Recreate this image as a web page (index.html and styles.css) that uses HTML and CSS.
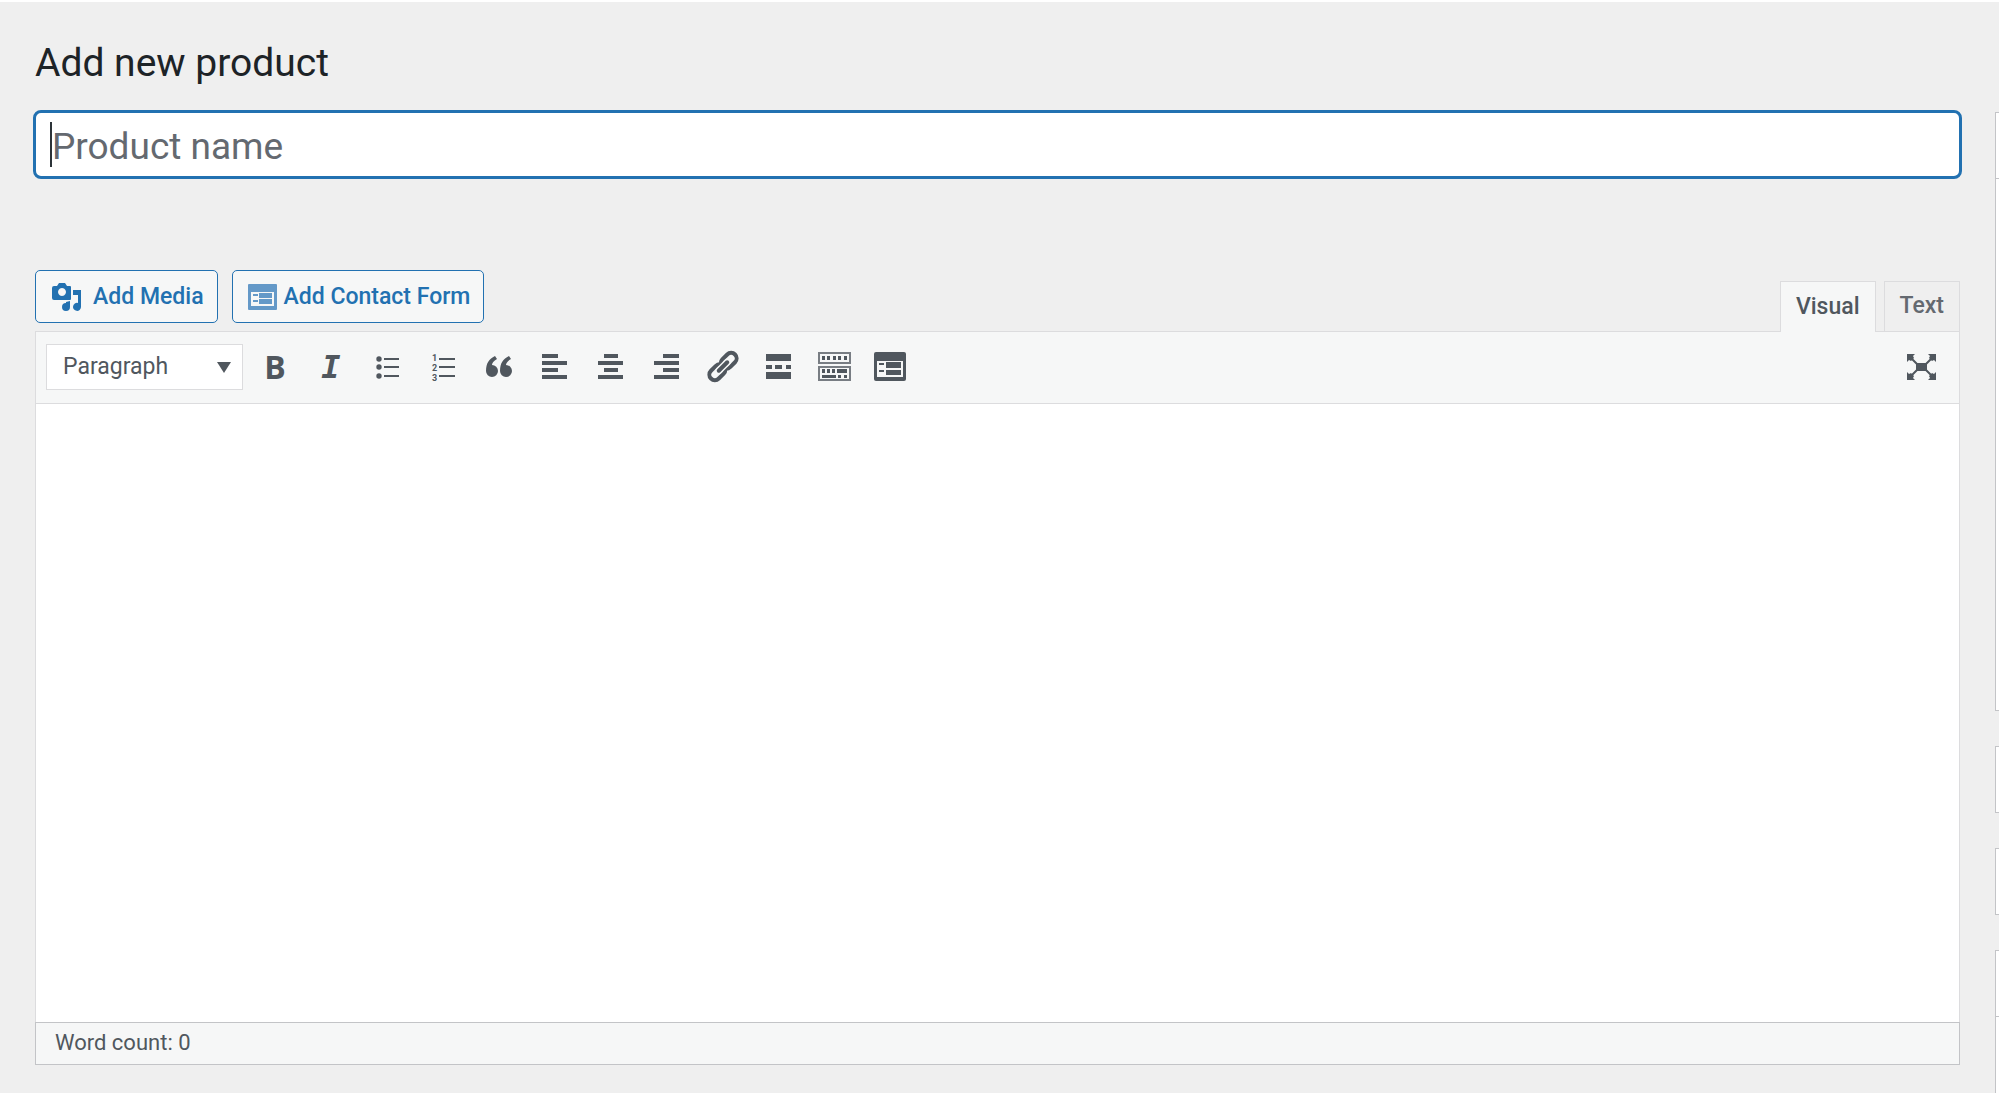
FILE: index.html
```
<!DOCTYPE html>
<html lang="en">
<head>
    <meta charset="UTF-8">
    <meta name="viewport" content="width=device-width, initial-scale=1.0">
    <title>Add new product</title>
    <link rel="stylesheet" href="styles.css">
</head>
<body>
    <div class="page">
        <main class="main">
            <h1>Add new product</h1>
            <form class="product-form">
                <div class="title-wrap">
                    <input type="text" class="title-input" id="title" name="title" placeholder="Product name" aria-label="Product name" autofocus>
                </div>

                <div class="editor-tools">
                    <div class="media-buttons">
                        <button type="button" class="button media">
                            <svg width="30" height="30" viewBox="0 0 30 30">
                                <path fill-rule="evenodd" d="M3 4h3l2-3h6l2 3h3q1 0 1 1v12q0 1-1 1H3q-2 0-2-2V6q0-2 2-2zM11 6a4 4 0 1 0 0.010 0z"/>
                                <path d="M22 8h8v17a4 4 0 1 1-3-4v-8h-5z"/>
                                <path d="M15 20l4-1v6a4 4 0 1 1-4-4z"/>
                            </svg>
                            Add Media
                        </button>
                        <button type="button" class="button contact">
                            <svg width="29" height="26" viewBox="0 0 29 26">
                                <rect width="29" height="26" rx="1"/>
                                <path class="cut" d="M3 8h23v14H3z"/>
                                <path d="M5 10h5v2H5zM5 16h5v2H5zM11 9h13v5H11zM11 15h13v5H11z"/>
                            </svg>
                            Add Contact Form
                        </button>
                    </div>
                    <div class="tabs">
                        <button type="button" class="tab active">Visual</button>
                        <button type="button" class="tab">Text</button>
                    </div>
                </div>

                <div class="editor">
                    <div class="toolbar">
                        <div class="format">
                            <select aria-label="Format">
                                <option>Paragraph</option>
                                <option>Heading 1</option>
                                <option>Heading 2</option>
                                <option>Preformatted</option>
                            </select>
                        </div>
                        <div class="tool-group">
                            <button type="button" class="tool bold" aria-label="Bold">B</button>
                            <button type="button" class="tool italic" aria-label="Italic">I</button>
                            <button type="button" class="tool" aria-label="Bulleted list">
                                <svg viewBox="0 0 36 36">
                                    <circle cx="10" cy="10" r="2.700"/><circle cx="10" cy="18" r="2.700"/><circle cx="10" cy="27" r="2.700"/>
                                    <path d="M15 9h15v2H15zM15 17h15v2H15zM15 26h15v2H15z"/>
                                </svg>
                            </button>
                            <button type="button" class="tool" aria-label="Numbered list">
                                <svg viewBox="0 0 36 36">
                                    <text x="7" y="12">1</text><text x="7" y="22">2</text><text x="7" y="32">3</text>
                                    <path d="M14 9h16v2H14zM14 17h16v2H14zM14 26h16v2H14z"/>
                                </svg>
                            </button>
                            <button type="button" class="tool" aria-label="Blockquote">
                                <svg viewBox="0 0 36 36">
                                    <path d="M14 7l2 3q-5 3-5 6a6 6 0 1 1-6 6C5 14 8 10 14 7zM28 7l2 3q-5 3-5 6a6 6 0 1 1-6 6C19 14 22 10 28 7z"/>
                                </svg>
                            </button>
                            <button type="button" class="tool" aria-label="Align left">
                                <svg viewBox="0 0 36 36"><path d="M5 5h16v4H5zM5 12h25v4H5zM5 19h16v4H5zM5 26h25v4H5z"/></svg>
                            </button>
                            <button type="button" class="tool" aria-label="Align center">
                                <svg viewBox="0 0 36 36"><path d="M11 5h14v4H11zM5 12h25v4H5zM11 19h14v4H11zM5 26h25v4H5z"/></svg>
                            </button>
                            <button type="button" class="tool" aria-label="Align right">
                                <svg viewBox="0 0 36 36"><path d="M14 5h16v4H14zM5 12h25v4H5zM14 19h16v4H14zM5 26h25v4H5z"/></svg>
                            </button>
                            <button type="button" class="tool" aria-label="Insert link">
                                <svg viewBox="0 0 36 36">
                                    <g transform="rotate(-45 18 17.500)">
                                        <rect class="line" x="1" y="12" width="18" height="11" rx="5.500"/>
                                        <rect class="line" x="17" y="12" width="18" height="11" rx="5.500"/>
                                        <path class="gap" d="M12 17.500h12"/>
                                        <path class="line" d="M12 17.500h12"/>
                                    </g>
                                </svg>
                            </button>
                            <button type="button" class="tool" aria-label="Read more">
                                <svg viewBox="0 0 36 36"><path d="M5 5h25v7H5zM5 16h6v4H5zM14 16h7v4H14zM25 16h5v4H25zM5 23h25v7H5z"/></svg>
                            </button>
                            <button type="button" class="tool" aria-label="Toolbar toggle">
                                <svg viewBox="0 0 36 36">
                                    <path class="soft" fill-rule="evenodd" d="M1 3h33v12H1zM3 5v8h29V5zM1 17h33v15H1zM3 19v11h29V19z"/>
                                    <path d="M5 7h3v4H5zM10 7h3v4h-3zM16 7h3v4h-3zM21 7h3v4h-3zM27 7h3v4h-3zM5 20h3v4H5zM10 20h3v4h-3zM15 20h3v4h-3zM20 20h10v4H20zM5 26h14v3H5zM21 26h3v3h-3zM27 26h3v3h-3z"/>
                                </svg>
                            </button>
                            <button type="button" class="tool" aria-label="Add contact form">
                                <svg viewBox="0 0 36 36">
                                    <rect x="1" y="3" width="32" height="29" rx="2"/>
                                    <path class="cut" d="M4 12h26v16H4z"/>
                                    <path d="M6 14h5v2H6zM6 21h5v2H6zM13 13h15v6H13zM13 21h15v5H13z"/>
                                </svg>
                            </button>
                        </div>
                        <button type="button" class="tool fullscreen" aria-label="Distraction-free writing mode">
                            <svg viewBox="0 0 36 36">
                                <path d="M13 14h11v8H13zM4 5h8l-2 2 1 2-3 3-2-1-2 2zM33 5v8l-2-2-2 1-3-3 1-2-2-2zM4 31v-8l2 2 2-1 3 3-1 2 2 2zM33 31h-8l2-2-1-2 3-3 2 1 2-2z"/>
                                <path class="thin" d="M7 8l7 7M30 8l-7 7M7 28l7-7M30 28l-7-7"/>
                            </svg>
                        </button>
                    </div>
                    <textarea class="content" aria-label="Product description"></textarea>
                    <div class="status">Word count: 0</div>
                </div>
            </form>
        </main>
        <aside class="sidebar">
            <div class="box publish"><div class="box-header"></div></div>
            <div class="box"></div>
            <div class="box"></div>
            <div class="box last"><div class="box-header"></div></div>
        </aside>
    </div>
</body>
</html>
```
FILE: styles.css
```
* {
    box-sizing: border-box;
}
body {
    margin: 0;
    padding: 2px 0 1px;
    background: #fff;
    color: #50575e;
    font-family: Roboto, sans-serif;
    font-size: 23px;
}
button,
input,
select,
textarea {
    font: inherit;
    color: inherit;
}
.page {
    display: grid;
    grid-template-columns: 1fr 4px;
    column-gap: 33px;
    min-height: calc(100vh - 3px);
    padding-left: 33px;
    background: #efefef;
    overflow: hidden;
}
.main {
    display: flex;
    flex-direction: column;
    padding: 37px 0 28px;
}
h1 {
    margin: 0 2px 23px;
    color: #1d2327;
    font-size: 39px;
    font-weight: 400;
    line-height: 48px;
}
.product-form {
    display: flex;
    flex: 1;
    flex-direction: column;
}
.title-wrap {
    position: relative;
}
/* text cursor */
.title-wrap::after {
    content: "";
    position: absolute;
    top: 12px;
    left: 17px;
    width: 2px;
    height: 45px;
    background: #2c3338;
}
.title-input {
    display: block;
    width: 100%;
    height: 69px;
    padding: 3px 16px 0;
    border: 3px solid #2271b1;
    border-radius: 8px;
    outline: none;
    background: #fff;
    font-size: 37px;
    caret-color: transparent;
}
.title-input::placeholder {
    color: #646970;
    opacity: 1;
}
.editor-tools {
    display: flex;
    justify-content: space-between;
    margin: 91px 2px 0;
}
.media-buttons {
    display: flex;
    gap: 14px;
    margin-bottom: 8px;
}
.button {
    display: flex;
    align-items: center;
    height: 53px;
    padding: 0 13px 0 15px;
    border: 1px solid #2271b1;
    border-radius: 5px;
    background: #f6f7f7;
    color: #2271b1;
    font-weight: 500;
    cursor: pointer;
}
.button svg {
    fill: currentColor;
}
.media svg {
    margin-right: 12px;
}
.contact svg {
    margin-right: 7px;
    fill: #6499c8;
}
svg .cut {
    fill: #f6f7f7;
}
.tabs {
    display: flex;
    gap: 8px;
    margin-top: 11px;
}
.tab {
    height: 50px;
    margin: 0;
    padding: 0 15px 2px;
    border: 1px solid #dcdcde;
    border-bottom: 0;
    background: #efefef;
    color: #646970;
    font-weight: 500;
    cursor: pointer;
}
.tab.active {
    height: 51px;
    margin-bottom: -1px;
    background: #f6f7f7;
    color: #50575e;
    z-index: 1;
}
.editor {
    display: flex;
    flex: 1;
    flex-direction: column;
    margin: 0 2px;
    border: 1px solid #dcdcde;
    background: #fff;
}
.toolbar {
    display: flex;
    align-items: center;
    gap: 14px;
    height: 72px;
    padding: 0 20px 2px 10px;
    border-bottom: 1px solid #dcdcde;
    background: #f6f7f7;
}
.format {
    position: relative;
}
.format select {
    display: block;
    width: 197px;
    height: 46px;
    padding: 0 16px;
    border: 1px solid #dcdcde;
    border-radius: 0;
    background: #fff;
    appearance: none;
}
.format::after {
    content: "";
    position: absolute;
    top: 18px;
    right: 12px;
    border: 7px solid transparent;
    border-top: 11px solid #50575e;
    border-bottom: 0;
    pointer-events: none;
}
.tool-group {
    display: flex;
    gap: 20px;
}
.tool {
    width: 36px;
    height: 36px;
    padding: 0;
    border: 0;
    background: none;
    line-height: 36px;
    cursor: pointer;
}
.tool svg {
    display: block;
    width: 36px;
    height: 36px;
    fill: #50575e;
}
.tool text {
    font: bold 9px Roboto, sans-serif;
}
.tool .line,
.tool .gap,
.tool .thin {
    fill: none;
    stroke: #50575e;
    stroke-width: 4;
    stroke-linecap: round;
}
.tool .gap {
    stroke: #f6f7f7;
    stroke-width: 7;
}
.tool .thin {
    stroke-width: 2;
}
.tool .soft {
    fill: #787d83;
}
.bold {
    font-family: "Open Sans", sans-serif;
    font-size: 32px;
    font-weight: 700;
}
.italic {
    font-family: "DejaVu Sans Mono", monospace;
    font-size: 32px;
    font-style: italic;
    font-weight: 700;
}
.fullscreen {
    margin-left: auto;
}
.content {
    display: block;
    flex: 1;
    width: 100%;
    padding: 16px;
    border: 0;
    outline: none;
    background: #fff;
    resize: none;
}
.status {
    height: 43px;
    margin: 0 -1px -1px;
    padding: 0 19px;
    border: 1px solid #c3c4c7;
    background: #f6f7f7;
    font-size: 22px;
    line-height: 40px;
}
.sidebar {
    display: flex;
    flex-direction: column;
    gap: 35px;
    padding-top: 110px;
}
.box {
    height: 67px;
    border: 1px solid #c3c4c7;
    border-right: 0;
    background: #fff;
}
.box-header {
    height: 66px;
    border-bottom: 1px solid #c3c4c7;
}
.publish {
    height: 599px;
}
.last {
    flex: 1;
    border-bottom: 0;
}
```
